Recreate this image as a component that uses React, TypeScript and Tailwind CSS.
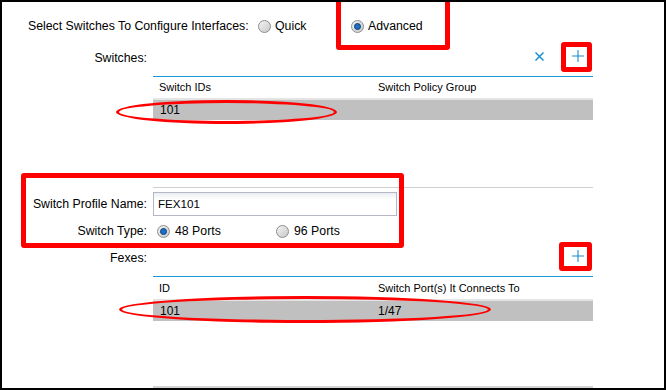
import React from "react";

function Radio({ checked }: { checked?: boolean }) {
  return (
    <span className="w-[13px] h-[13px] rounded-full border border-[#8c8c8c] bg-gradient-to-br from-[#f4f4f4] to-[#c8c8c8] flex items-center justify-center shrink-0">
      {checked && <span className="w-[7px] h-[7px] rounded-full bg-[#1f6fc0] border border-[#0d3f78]" />}
    </span>
  );
}

function Plus() {
  return (
    <svg width="14" height="14" viewBox="0 0 14 14">
      <path d="M7 1v12M1 7h12" stroke="#1a8fd0" strokeWidth="1.1" />
    </svg>
  );
}

function Cross() {
  return (
    <svg width="11" height="11" viewBox="0 0 11 11">
      <path d="M1.5 1.5l8 8M9.5 1.5l-8 8" stroke="#1a8fd0" strokeWidth="1.5" />
    </svg>
  );
}

export default function App() {
  return (
    <div
      className="relative w-[666px] h-[390px] border-2 border-black bg-white text-[12.3px] text-black overflow-hidden"
      style={{ fontFamily: '"Liberation Sans", Arial, sans-serif' }}
    >
      {/* top selector */}
      <div className="flex items-center h-[20px] mt-[14px] pl-[26px]">
        <span className="w-[230px]">Select Switches To Configure Interfaces:</span>
        <span className="w-[93px] flex items-center gap-[4px]">
          <Radio />
          <span>Quick</span>
        </span>
        <span className="flex items-center gap-[4px]">
          <Radio checked />
          <span>Advanced</span>
        </span>
      </div>

      {/* switches */}
      <div className="flex items-center h-[20px] mt-[12px]">
        <span className="w-[145px] text-right">Switches:</span>
        <div className="w-[440px] ml-[6px] flex justify-end items-center gap-[26px] pr-[8px] -mt-[4px]">
          <Cross />
          <Plus />
        </div>
      </div>
      <div className="ml-[151px] w-[440px] mt-[8px] text-[11px]">
        <div className="border-t border-[#1a9ad6] h-[24px] flex items-center border-b-2 border-b-[#e4e4e4]">
          <span className="w-[225px] pl-[6px]">Switch IDs</span>
          <span>Switch Policy Group</span>
        </div>
        <div className="bg-[#c0c0c0] h-[20px] flex items-center pl-[7px] text-[12px]">101</div>
      </div>

      {/* profile */}
      <div className="ml-[151px] w-[440px] mt-[67px] border-t border-[#cfcfcf]" />
      <div className="flex items-center mt-[4px]">
        <span className="w-[145px] text-right">Switch Profile Name:</span>
        <div className="ml-[6px] w-[244px] h-[24px] border border-[#b4b8c6] bg-gradient-to-b from-[#eceef2] to-white to-[30%] flex items-center pl-[4px] text-[11.6px]">
          FEX101
        </div>
      </div>
      <div className="flex items-center h-[20px] mt-[5px]">
        <span className="w-[145px] text-right">Switch Type:</span>
        <span className="ml-[10px] flex items-center gap-[5px] w-[119px]">
          <Radio checked />
          <span>48 Ports</span>
        </span>
        <span className="flex items-center gap-[5px]">
          <Radio />
          <span>96 Ports</span>
        </span>
      </div>

      {/* fexes */}
      <div className="flex items-center h-[20px] mt-[7px]">
        <span className="w-[145px] text-right">Fexes:</span>
        <div className="w-[440px] ml-[6px] flex justify-end pr-[8px] -mt-[4px]">
          <Plus />
        </div>
      </div>
      <div className="ml-[151px] w-[440px] mt-[8px] h-[112px] border-b-2 border-b-[#d4d4d4] text-[11px]">
        <div className="border-t border-[#1a9ad6] h-[25px] flex items-center border-b-2 border-b-[#e4e4e4]">
          <span className="w-[225px] pl-[6px]">ID</span>
          <span>Switch Port(s) It Connects To</span>
        </div>
        <div className="bg-[#c0c0c0] h-[20px] flex items-center text-[12px]">
          <span className="w-[225px] pl-[7px]">101</span>
          <span>1/47</span>
        </div>
      </div>

      {/* annotations */}
      <div className="absolute left-[334px] -top-[5px] w-[114px] h-[53px] border-[5px] border-[#ff0000] rounded-[3px]" />
      <div className="absolute left-[559px] top-[40px] w-[31px] h-[30px] border-[5px] border-[#ff0000] rounded-[3px]" />
      <div className="absolute left-[19px] top-[171px] w-[383px] h-[75px] border-[5px] border-[#ff0000] rounded-[3px]" />
      <div className="absolute left-[557px] top-[240px] w-[33px] h-[29px] border-[5px] border-[#ff0000] rounded-[3px]" />
      <div className="absolute left-[114px] top-[98px] w-[221px] h-[24px] border-[3px] border-[#ff0000] rounded-[50%]" />
      <div className="absolute left-[117px] top-[294px] w-[372px] h-[27px] border-[3px] border-[#ff0000] rounded-[50%]" />
    </div>
  );
}
